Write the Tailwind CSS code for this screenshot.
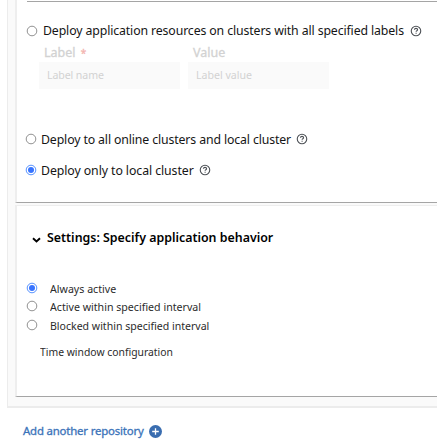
<!DOCTYPE html>
<html lang="en">
<head>
<meta charset="utf-8">
<title>Application deployment</title>
<script src="https://cdn.jsdelivr.net/npm/@tailwindcss/browser@4"></script>
</head>
<body class="h-[445px] w-[437px] overflow-hidden bg-white font-['Noto_Sans',sans-serif] text-[#151515] whitespace-nowrap">
<svg class="hidden"><defs>
<symbol id="help" viewBox="0 0 12 12"><circle cx="6" cy="6" r="4.75" fill="none" stroke="#4d5156" stroke-width="1.1"/><path d="M4.4 4.8C4.5 3.8 5.2 3.4 6 3.4S7.6 3.9 7.6 4.7C7.6 5.7 6.1 5.7 6.1 6.8M6.1 7.7V8.7" fill="none" stroke="#4d5156" stroke-width="1.1"/></symbol>
<symbol id="radio" viewBox="0 0 12 12"><circle cx="6" cy="6" r="4.8" fill="white" stroke="#858585" stroke-width=".9"/></symbol>
<symbol id="radio-on" viewBox="0 0 12 12"><circle cx="6" cy="6" r="4.8" fill="white" stroke="#4285ff" stroke-width=".9"/><circle cx="6" cy="6" r="3" fill="#3874ff"/></symbol>
</defs></svg>
<main class="flex h-full flex-col">
  <div class="ml-[7px] flex h-[408px] flex-col border-b-2 border-l border-[#ececec] bg-[#fafafa] pl-[7px]">
    <section class="h-[203px] border-b border-l-2 border-l-[#eee] border-b-[#a5a5a5] bg-white">
      <div class="ml-[10px] h-[2px] border-b border-[#a5a5a5]"></div>
      <div class="flex h-[42px] items-center pt-[15px] pl-[9px]">
        <svg class="size-[12px]"><use href="#radio"/></svg>
        <span class="ml-[5px] w-[367px] text-[12.3px] leading-[18px] tracking-[-0.12px]">Deploy application resources on clusters with all specified labels</span>
        <svg class="size-[12px]"><use href="#help"/></svg>
      </div>
      <div class="flex gap-[8px] pl-[22px] text-[#d2d2d2]">
        <label class="w-[141px]"><span class="block h-[18px] pl-[5px] text-[12.5px] leading-[18px] [-webkit-text-stroke:0.3px_#d2d2d2]">Label <span class="ml-[2px] text-[10px] text-[#f3b4b0] [-webkit-text-stroke:0.3px_#f3b4b0]">*</span></span><span class="block h-[27px] bg-[#fafafa] pl-[8px] text-[10.6px] leading-[26px] tracking-[-0.1px]">Label name</span></label>
        <label class="w-[141px]"><span class="block h-[18px] pl-[5px] text-[12.5px] leading-[18px] [-webkit-text-stroke:0.3px_#d2d2d2]">Value</span><span class="block h-[27px] bg-[#fafafa] pl-[8px] text-[10.6px] leading-[26px]">Label value</span></label>
      </div>
      <div class="mt-[34px] flex h-[31px] items-center pl-[8px]">
        <svg class="mt-px size-[12px]"><use href="#radio"/></svg>
        <span class="mt-[2px] ml-[4px] w-[255px] text-[12.3px] leading-[18px] tracking-[-0.13px]">Deploy to all online clusters and local cluster</span>
        <svg class="mt-px size-[12px]"><use href="#help"/></svg>
      </div>
      <div class="flex h-[31px] items-center pl-[8px]">
        <svg class="mt-px size-[12px]"><use href="#radio-on"/></svg>
        <span class="mt-[2px] ml-[4px] w-[158px] text-[12.3px] leading-[18px] tracking-[-0.08px]">Deploy only to local cluster</span>
        <svg class="mt-px size-[12px]"><use href="#help"/></svg>
      </div>
    </section>
    <section class="mt-[2px] h-[192px] border-t border-b border-l-2 border-t-[#eee] border-l-[#eee] border-b-[#a5a5a5] bg-white">
      <h2 class="flex h-[64px] items-center pl-[15px] text-[12.4px] font-semibold text-black"><svg class="mt-[3px] mr-[6px] h-[6px] w-[9px]" viewBox="0 0 9 6"><path d="M1 1.2 4.5 4.5 8 1.2" fill="none" stroke="currentColor" stroke-width="1.9"/></svg><span>Settings: Specify application behavior</span></h2>
      <div class="mt-[9px] text-[11.6px] text-[#2b2b2b]">
        <div class="flex h-[18px] items-center pl-[9px]"><svg class="size-[12px]"><use href="#radio-on"/></svg><span class="mt-[1px] ml-[12px] origin-left scale-x-[.917]">Always active</span></div>
        <div class="flex h-[18px] items-center pl-[9px]"><svg class="size-[12px]"><use href="#radio"/></svg><span class="mt-[1px] ml-[12px] origin-left scale-x-[.917]">Active within specified interval</span></div>
        <div class="flex h-[20px] items-center pl-[9px]"><svg class="size-[12px]"><use href="#radio"/></svg><span class="mt-[1px] ml-[12px] origin-left scale-x-[.91]">Blocked within specified interval</span></div>
        <div class="mt-[8px] ml-[23px] origin-left scale-x-[.895] leading-[18px]">Time window configuration</div>
      </div>
    </section>
  </div>
  <button class="flex h-[37px] items-center pt-[10px] pl-[23px] text-[11.4px] tracking-[-0.18px] text-[#3b73b9] [-webkit-text-stroke:0.3px_#3b73b9]"><span class="w-[126px] -mt-px text-left">Add another repository</span><svg class="size-[13px]" viewBox="0 0 13 13"><circle cx="6.5" cy="6.5" r="6.5" fill="#3a6db0" stroke="none"/><path d="M6.5 3.2v6.6M3.2 6.5h6.6" stroke="white" stroke-width="1.3"/></svg></button>
</main>
</body>
</html>
